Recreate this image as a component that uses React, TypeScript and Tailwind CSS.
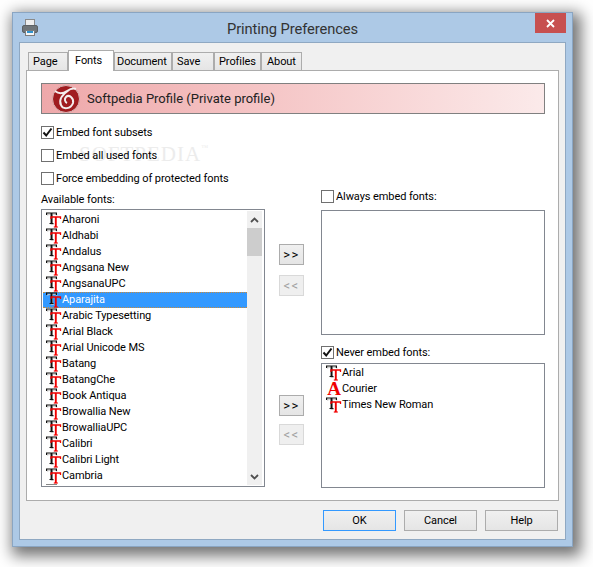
import { clsx } from "clsx";

const availableFonts = [
    "Aharoni",
    "Aldhabi",
    "Andalus",
    "Angsana New",
    "AngsanaUPC",
    "Aparajita",
    "Arabic Typesetting",
    "Arial Black",
    "Arial Unicode MS",
    "Batang",
    "BatangChe",
    "Book Antiqua",
    "Browallia New",
    "BrowalliaUPC",
    "Calibri",
    "Calibri Light",
    "Cambria",
    "Cambria Math",
];

const tabs = [
    { label: "Page", className: "w-[40px] pl-[4px]" },
    { label: "Fonts", className: "w-[46px] pl-[6px]" },
    { label: "Document", className: "w-[58px] pl-[2px]" },
    { label: "Save", className: "w-[42px] pl-[4px]" },
    { label: "Profiles", className: "w-[47px] pl-[4px]" },
    { label: "About", className: "w-[41px] pl-[5px]" },
];

// overlapping black and red T, the TrueType mark
const TrueTypeIcon = () => (
    <svg width="16" height="16" viewBox="0 0 16 16" className="shrink-0">
        <path d="M1 3V1.5H10V3M5.5 1.5V11.5M4 11.5H7" stroke="#c8c8c8" strokeWidth="1" fill="none" transform="translate(0.8 0.8)" />
        <path d="M0.6 3V1H10.4V3" stroke="#111" strokeWidth="1.2" fill="none" />
        <path d="M5.5 1V11.5" stroke="#111" strokeWidth="1.9" fill="none" />
        <path d="M3.5 11.5H7.5" stroke="#111" strokeWidth="1.1" fill="none" />
        <path d="M5 7V5H14.5V7" stroke="#f00000" strokeWidth="1.3" fill="none" />
        <path d="M9.8 5V15" stroke="#f00000" strokeWidth="1.9" fill="none" />
        <path d="M7.8 15H11.8" stroke="#f00000" strokeWidth="1.2" fill="none" />
    </svg>
);

const CheckBox = ({ checked }: { checked?: boolean }) => (
    <span className="flex h-[13px] w-[13px] shrink-0 items-center justify-center border border-[#707070] bg-white">
        {checked && (
            <svg width="11" height="11" viewBox="0 0 11 11">
                <path d="M1.5 5.5L4.2 8.5L9.5 1.5" stroke="#111" strokeWidth="2" fill="none" />
            </svg>
        )}
    </span>
);

const CheckRow = ({ label, checked, className }: { label: string; checked?: boolean; className?: string }) => (
    <div className={clsx("relative flex items-center gap-[2px] leading-[13px]", className)}>
        <CheckBox checked={checked} />
        <span>{label}</span>
    </div>
);

const FontRow = ({ name, selected }: { name: string; selected?: boolean }) => (
    <div
        className={clsx(
            "flex h-[16px] items-center pl-[3px] leading-[16px] whitespace-nowrap",
            selected && "border-y border-dotted border-y-[#c98a3c] bg-[#3399ff] text-white",
        )}
    >
        <TrueTypeIcon />
        <span>{name}</span>
    </div>
);

const MoveButton = ({ label, disabled }: { label: string; disabled?: boolean }) => (
    <div
        className={clsx(
            "flex h-[21px] w-[25px] items-center justify-center border text-[13px] tracking-[1.5px]",
            disabled
                ? "border-[#d9d9d9] bg-[#efefef] text-[#a0a0a0]"
                : "border-[#acacac] bg-gradient-to-b from-[#f0f0f0] to-[#e5e5e5] text-black",
        )}
    >
        {label}
    </div>
);

const DialogButton = ({ label, primary }: { label: string; primary?: boolean }) => (
    <div
        className={clsx(
            "flex h-[21px] w-[73px] items-center justify-center border bg-gradient-to-b from-[#f0f0f0] to-[#e5e5e5] pt-px",
            primary ? "border-[#3399ff]" : "border-[#acacac]",
        )}
    >
        {label}
    </div>
);

const App = () => {
    return (
        <div className="h-[567px] w-[593px] overflow-hidden bg-white pt-[12px] pl-[12px] font-['Roboto',sans-serif] text-[11px] tracking-[-0.09px] text-black">
            <div className="h-[535px] w-[561px] border border-[#8aa5c2] bg-[#adc9e6] shadow-[4px_5px_14px_4px_rgba(0,0,0,0.55)]">
                {/* Title bar */}
                <div className="relative flex h-[29px] items-center justify-center">
                    <svg width="16" height="18" viewBox="0 0 16 18" className="absolute top-[6px] left-[9px]">
                        <rect x="3.5" y="0.5" width="9" height="6" fill="#eeeeee" stroke="#8a8a8a" />
                        <rect x="0.5" y="6.5" width="15" height="7" rx="1.5" fill="#6f7579" stroke="#5c6165" />
                        <rect x="3.5" y="11.5" width="9" height="5" fill="#f6f6f6" stroke="#7d7d7d" />
                        <rect x="5" y="12" width="6" height="2" fill="#2f93cf" />
                    </svg>
                    <span className="mt-[2px] text-[14.7px] leading-[20px] text-[#333]">Printing Preferences</span>
                    <div className="absolute top-0 right-[6px] flex h-[20px] w-[31px] items-center justify-center bg-[#c75050]">
                        <svg width="9" height="9" viewBox="0 0 9 9">
                            <path d="M1 1L8 8M8 1L1 8" stroke="#fff" strokeWidth="1.8" />
                        </svg>
                    </div>
                </div>

                {/* Client area */}
                <div className="mx-[6px] h-[498px] border border-[#8fa8c2] bg-[#f0f0f0]">
                    <div className="flex h-[27px] items-end pl-[8px]">
                        {tabs.map((tab) => (
                            <div
                                key={tab.label}
                                className={clsx(
                                    "relative -mb-px flex items-center border border-[#acacac]",
                                    tab.className,
                                    tab.label === "Fonts"
                                        ? "z-10 h-[21px] border-b-0 bg-white"
                                        : "h-[19px] bg-gradient-to-b from-[#f0f0f0] to-[#e5e5e5] pt-[2px]",
                                )}
                            >
                                {tab.label}
                            </div>
                        ))}
                    </div>

                    {/* Tab panel */}
                    <div className="mx-[6px] h-[431px] border border-[#acacac] bg-white px-[14px] pt-[12px]">
                        <div className="relative">
                            {/* Profile banner */}
                            <div className="flex h-[31px] w-[504px] items-center gap-[7px] border border-[#808080] bg-gradient-to-r from-[#eea8aa] to-[#fbeaea] pl-[10px] text-[13px] tracking-normal">
                                <svg width="28" height="28" viewBox="0 0 28 28">
                                    <circle cx="14" cy="14" r="13.5" fill="#a01c20" stroke="#d9b4b4" />
                                    <path
                                        d="M3 6C8 10 12 8 15 6C18 4 21 3 24 4M17 5C11 9 6 14 9 20C11 25 19 24 21 18C22 13 17 9 14 12C12 14 13 17 15 18"
                                        fill="none"
                                        stroke="#f4eeee"
                                        strokeWidth="2"
                                    />
                                </svg>
                                <span className="text-[#222]">Softpedia Profile (Private profile)</span>
                            </div>

                            {/* Softpedia watermark */}
                            <span className="absolute top-[59px] left-[38px] font-['Liberation_Serif',serif] text-[21px] leading-[24px] tracking-[1px] text-[#ececec]">
                                SOFTPEDIA<span className="align-top text-[7px] leading-[12px]">™</span>
                            </span>

                            <CheckRow className="mt-[12px]" label="Embed font subsets" checked />
                            <CheckRow className="mt-[10px]" label="Embed all used fonts" />
                            <CheckRow className="mt-[10px]" label="Force embedding of protected fonts" />

                            <div className="mt-[5px] grid grid-cols-[224px_56px_224px]">
                                {/* Available fonts */}
                                <div>
                                    <div className="flex h-[19px] items-center pt-[1px]">Available fonts:</div>
                                    <div className="flex h-[278px] overflow-hidden border border-[#828790] pt-px pr-[2px] pb-px pl-px">
                                        <div className="min-w-0 flex-1 overflow-hidden pt-px">
                                            {availableFonts.map((name) => (
                                                <FontRow key={name} name={name} selected={name === "Aparajita"} />
                                            ))}
                                        </div>
                                        <div className="flex w-[15px] shrink-0 flex-col bg-[#f0f0f0]">
                                            <div className="flex h-[17px] items-center justify-center">
                                                <svg width="9" height="6" viewBox="0 0 9 6">
                                                    <path d="M1 5L4.5 1.5L8 5" fill="none" stroke="#505050" strokeWidth="1.8" />
                                                </svg>
                                            </div>
                                            <div className="h-[28px] bg-[#cdcdcd]" />
                                            <div className="flex-1" />
                                            <div className="flex h-[17px] items-center justify-center">
                                                <svg width="9" height="6" viewBox="0 0 9 6">
                                                    <path d="M1 1L4.5 4.5L8 1" fill="none" stroke="#505050" strokeWidth="1.8" />
                                                </svg>
                                            </div>
                                        </div>
                                    </div>
                                </div>

                                {/* Move buttons */}
                                <div className="flex flex-col items-center pr-[3px]">
                                    <div className="mt-[54px] flex flex-col gap-[10px]">
                                        <MoveButton label=">>" />
                                        <MoveButton label="<<" disabled />
                                    </div>
                                    <div className="mt-[99px] flex flex-col gap-[8px]">
                                        <MoveButton label=">>" />
                                        <MoveButton label="<<" disabled />
                                    </div>
                                </div>

                                {/* Always / never embed */}
                                <div>
                                    <CheckRow className="h-[13px]" label="Always embed fonts:" />
                                    <div className="mt-[7px] h-[125px] border border-[#828790]" />
                                    <CheckRow className="mt-[11px] h-[13px]" label="Never embed fonts:" checked />
                                    <div className="mt-[4px] h-[125px] border border-[#828790] py-px pl-px">
                                        <FontRow name="Arial" />
                                        <div className="flex h-[16px] items-center pl-[3px]">
                                            <span className="w-[16px] text-center font-['Liberation_Serif',serif] text-[19px] leading-[16px] font-bold text-[#f00000]">
                                                A
                                            </span>
                                            <span>Courier</span>
                                        </div>
                                        <FontRow name="Times New Roman" />
                                    </div>
                                </div>
                            </div>
                        </div>
                    </div>

                    {/* Dialog buttons */}
                    <div className="flex justify-end gap-[8px] pt-[9px] pr-[7px]">
                        <DialogButton label="OK" primary />
                        <DialogButton label="Cancel" />
                        <DialogButton label="Help" />
                    </div>
                </div>
            </div>
        </div>
    );
};

export default App;
